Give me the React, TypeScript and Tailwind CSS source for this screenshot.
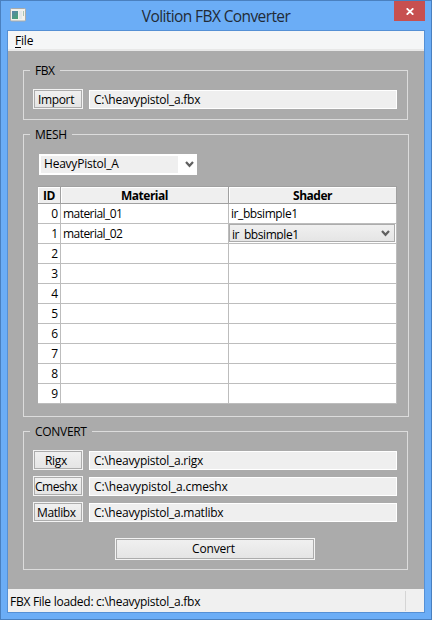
import type { ReactNode } from 'react';

const materials = [
  { name: 'material_01', shader: 'ir_bbsimple1' },
  { name: 'material_02', shader: 'ir_bbsimple1' },
];

function Group({ title, className, legend, children }: { title: string; className: string; legend: string; children: ReactNode }) {
  return (
    <section className={`relative shrink-0 border border-[#dcdcdc] ${className}`}>
      <h2 className={`absolute -top-[9px] left-[6px] h-[18px] bg-[#ababab] pl-[5px] leading-[18px] ${legend}`}>{title}</h2>
      {children}
    </section>
  );
}

function FileRow({ label, path, tracking, text }: { label: string; path: string; tracking: string; text: string }) {
  return (
    <div className="flex h-5 items-end gap-[6px]">
      <button className="h-5 w-[50px] shrink-0 border border-[#f3f3f3]">
        <span className={`block h-[18px] border border-[#acacac] bg-linear-to-b from-[#f0f0f0] to-[#e5e5e5] text-left leading-[18px] whitespace-nowrap ${tracking}`}>{label}</span>
      </button>
      <div className={`h-[19px] w-[308px] border border-white bg-[#efefef] pl-1 leading-[18px] ${text}`}>{path}</div>
    </div>
  );
}

function Chevron() {
  return (
    <svg width="9" height="7" viewBox="0 0 9 7" fill="none" stroke="#606060" strokeWidth="2.2">
      <path d="M1 1 4.5 4.8 8 1" />
    </svg>
  );
}

export default function App() {
  return (
    <div className="flex h-[620px] w-[432px] flex-col border border-[#4a80bf] bg-[#6badf6] px-[6px] pb-[6px] font-['Open_Sans','Noto_Sans',sans-serif] text-[12px] text-black">
      <header className="relative flex h-[29px] shrink-0 justify-center">
        <svg className="absolute top-[7px] left-[3px]" width="16" height="14" viewBox="0 0 16 14">
          <defs>
            <linearGradient id="pane" x1="0" y1="0" x2="0.6" y2="1">
              <stop offset="0" stopColor="#5a83ad" />
              <stop offset="1" stopColor="#4aa078" />
            </linearGradient>
          </defs>
          <rect x="0.5" y="0.5" width="15" height="12.5" rx="1" fill="#f2f1ec" stroke="#a9aaa8" />
          <rect x="2" y="3" width="6" height="8" fill="url(#pane)" />
          <rect x="9" y="3" width="3" height="8" fill="#e3e8e8" />
          <rect x="13" y="3" width="1" height="5" fill="#a9c3b5" />
        </svg>
        <h1 className="text-[15.5px] leading-[30px] tracking-[-0.6px] text-[#222b36]">Volition FBX Converter</h1>
        <button className="absolute top-0 right-0 flex h-5 w-[31px] items-center justify-center bg-[#c75050]">
          <svg className="mt-px ml-px" width="8" height="7" viewBox="0 0 8 7" stroke="white" strokeWidth="1.8">
            <path d="M.7 .3 7.3 6.7M7.3 .3 .7 6.7" />
          </svg>
        </button>
      </header>
      <main className="flex h-[583px] w-[418px] shrink-0 flex-col border border-[#5590d5] bg-[#ababab]">
        <nav className="h-5 shrink-0 border-b-2 border-[#e8e8e8] bg-[#f5f6f7] pl-[7px] leading-5 tracking-[-0.2px]">
          <span className="underline underline-offset-2">F</span>ile
        </nav>
        <div className="flex h-[538px] shrink-0 flex-col pt-[19px] pl-[15px]">
          <Group title="FBX" className="h-[50px] w-[385px] pt-[18px] pl-[9px]" legend="w-[30px] tracking-[-0.5px]">
            <FileRow label="Import" path="C:\heavypistol_a.fbx" tracking="pl-[3px] tracking-[-0.35px]" text="tracking-[-0.25px]" />
          </Group>
          <Group title="MESH" className="mt-[14px] h-[283px] w-[386px] pt-[19px] pl-[14px]" legend="w-[42px] tracking-[-0.25px]">
            <div className="ml-px flex h-[21px] w-[158px] items-center bg-white pl-[2px]">
              <span className="h-[17px] w-[137px] bg-[#efefef] pl-[3px] leading-4 tracking-[-0.22px]">HeavyPistol_A</span>
              <span className="ml-[7px]"><Chevron /></span>
            </div>
            <table className="mt-[11px] w-[359px] table-fixed border-separate border-spacing-0 bg-white">
              <colgroup>
                <col className="w-[23px]" />
                <col className="w-[168px]" />
                <col className="w-[168px]" />
              </colgroup>
              <thead>
                <tr className="h-[18px]">
                  {['ID', 'Material', 'Shader'].map((h) => (
                    <th key={h} className="h-[18px] border-t border-r border-b border-[#a0a0a0] bg-[#efefef] p-0 leading-4 font-bold tracking-[-0.5px] shadow-[inset_1px_1px_0_#fff]"><span className="relative top-px">{h}</span></th>
                  ))}
                </tr>
              </thead>
              <tbody>
                {Array.from({ length: 10 }, (_, i) => (
                  <tr key={i} className="h-5">
                    <td className="h-5 border-r border-b border-[#bdbdbd] p-0 pr-[2px] text-right leading-[19px]">{i}</td>
                    <td className="h-5 border-r border-b border-[#bdbdbd] p-0 pl-[2px] leading-[19px] tracking-[-0.55px]">{materials[i]?.name}</td>
                    <td className="h-5 border-r border-b border-[#bdbdbd] p-0 align-top leading-[19px] tracking-[-0.42px]">
                      {i === 1 ? (
                        <div className="flex h-[18px] w-[166px] items-center justify-between border border-[#acacac] bg-linear-to-b from-[#f0f0f0] to-[#e5e5e5] pr-1 pl-[2px]">
                          <span className="h-[13px] [clip-path:inset(0)] leading-[16px]">{materials[i].shader}</span>
                          <Chevron />
                        </div>
                      ) : (
                        <span className="block h-[19px] pl-[2px]">{materials[i]?.shader}</span>
                      )}
                    </td>
                  </tr>
                ))}
              </tbody>
            </table>
          </Group>
          <Group title="CONVERT" className="mt-[14px] h-[139px] w-[385px] pt-[18px] pl-[9px]" legend="w-[62px] tracking-[-0.3px]">
            <div className="flex flex-col gap-[6px]">
              <FileRow label="Rigx" path="C:\heavypistol_a.rigx" tracking="pl-[10px] tracking-[-0.3px]" text="tracking-[-0.25px]" />
              <FileRow label="Cmeshx" path="C:\heavypistol_a.cmeshx" tracking="pl-0 tracking-[-0.45px]" text="tracking-[-0.12px]" />
              <FileRow label="Matlibx" path="C:\heavypistol_a.matlibx" tracking="pl-[2px] tracking-[-0.4px]" text="tracking-[-0.25px]" />
            </div>
            <button className="mt-4 ml-[82px] block h-[22px] w-[200px] border border-[#f3f3f3]">
              <span className="block h-5 border border-[#acacac] bg-linear-to-b from-[#f0f0f0] to-[#e5e5e5] pr-[3px] leading-[18px] tracking-[-0.15px]">Convert</span>
            </button>
          </Group>
        </div>
        <footer className="flex h-[23px] shrink-0 items-center justify-between bg-[#f0f0f0] pr-[18px] pl-[2px]">
          <span className="relative top-px leading-[23px] tracking-[-0.27px]">FBX File loaded: c:\heavypistol_a.fbx</span>
          <span className="h-5 w-px bg-[#d5d5d5]" />
        </footer>
      </main>
    </div>
  );
}
